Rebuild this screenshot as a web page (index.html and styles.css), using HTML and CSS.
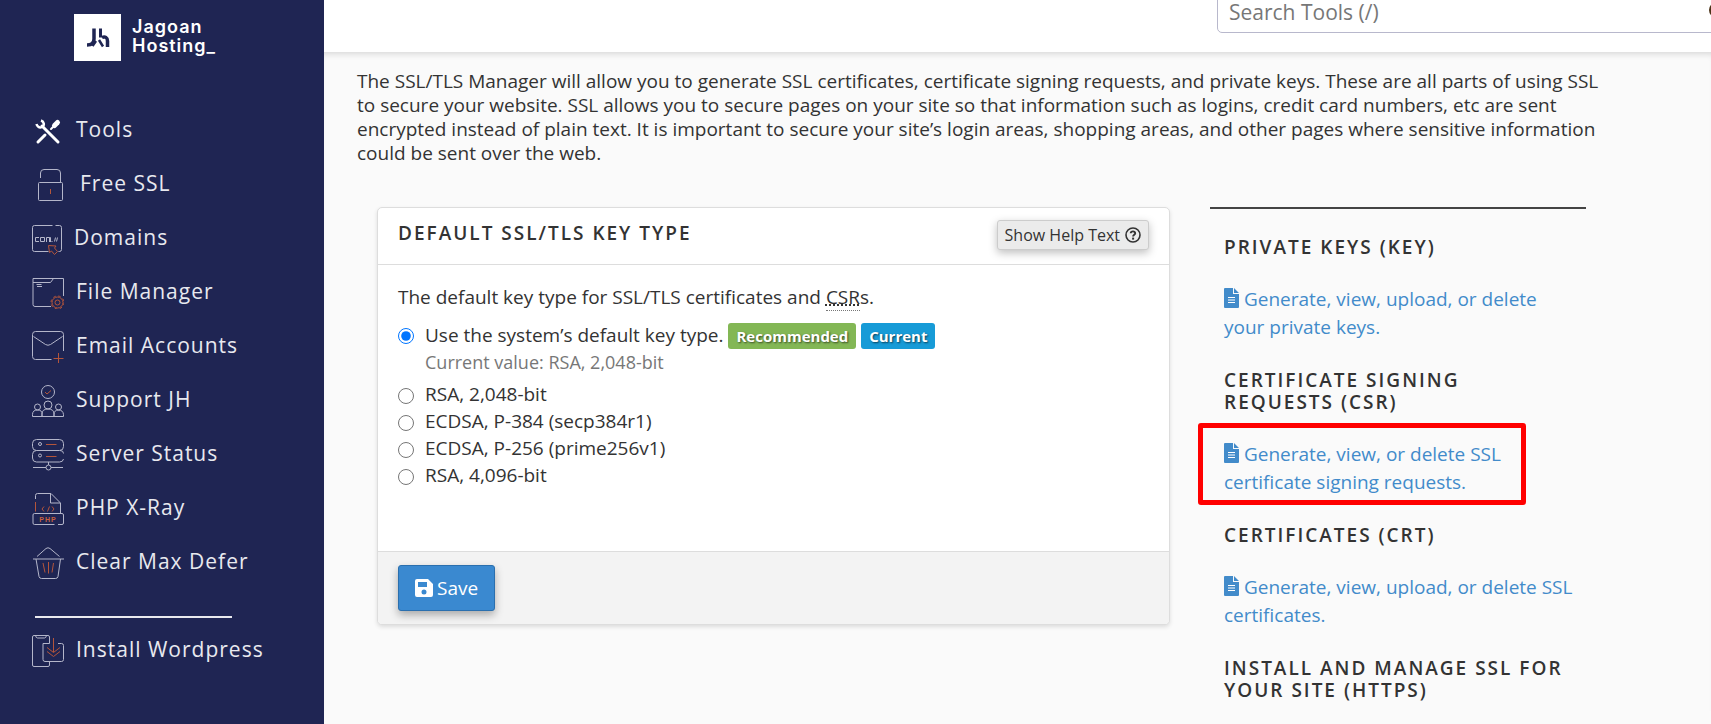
FILE: index.html
```html
<!DOCTYPE html>
<html lang="en">
<head>
<meta charset="utf-8">
<title>SSL/TLS Manager</title>
<link rel="stylesheet" href="styles.css">
</head>
<body>
<aside class="sidebar">
  <a class="brand" href="#">
    <svg class="brand-mark" viewBox="0 0 47 47" aria-hidden="true">
      <rect width="47" height="47" fill="#fff"/>
      <g fill="none" stroke="#1f2553">
        <path d="M20 14.500v10.500c0 4-2 6-7 6" stroke-width="3.500"/>
        <path d="M26.500 14.500v9" stroke-width="3"/>
        <path d="M28 23.500c3-1.500 5.500 0 5.500 3.500v6" stroke-width="3.500"/>
        <path d="M18.500 32l3.500-5M25 26l4 6.500" stroke-width="2.500"/>
      </g>
    </svg>
    <span class="brand-name">Jagoan<br>Hosting_</span>
  </a>
  <nav class="menu">
    <a class="menu-item" href="#">
      <svg class="icon" viewBox="0 0 32 32" aria-hidden="true">
        <g fill="none" stroke="#fff" stroke-linecap="round">
          <path d="M10 11l16 16" stroke-width="3"/>
          <path d="M6 27l7-7" stroke-width="3"/>
          <path d="M19 14l4-4" stroke-width="2"/>
          <path d="M22.500 10.500l3-3" stroke-width="5"/>
          <path d="M9 5.500c3 1 4 5 1 6.500s-5-1-5.500-3" stroke-width="2.500" stroke-linecap="butt"/>
        </g>
      </svg>
      <span>Tools</span>
    </a>
    <a class="menu-item menu-item-wide" href="#">
      <svg class="icon" viewBox="0 0 32 32" aria-hidden="true">
        <g class="line"><path d="M8.500 9V4q0-3.500 3.500-3.500h13q3.500 0 3.500 3.500v9.500"/><rect x="6.500" y="13.500" width="24" height="18" rx="1"/></g>
        <path class="accent" d="M18.500 20v5"/>
      </svg>
      <span>Free SSL</span>
    </a>
    <a class="menu-item menu-item-narrow" href="#">
      <svg class="icon" viewBox="0 0 32 32" aria-hidden="true">
        <g class="line"><path d="M20.500 2.500h-18q-2 0-2 2v22q0 2 2 2h14M23.500 2.500h4q2 0 2 2v22q0 2-2 2h-1"/>
        <path d="M7 14.500H3.500v4H7M8.500 14.500h4v4h-4zM14.500 19v-4.500h3V19M17.500 14.500h1V19M19.500 18.500h1M22.500 18.500l1-4M24.500 18.500l1-4"/></g>
        <path class="accent" d="M16.500 22.500l1 7 2-1.500 3 3.500 3-3-3-3.500 1.500-2z"/>
      </svg>
      <span>Domains</span>
    </a>
    <a class="menu-item" href="#">
      <svg class="icon" viewBox="0 0 32 32" aria-hidden="true">
        <g class="line"><path d="M19 29.500H3q-2 0-2-2V1.500h30.500V19"/><path d="M1 5.500h17.500l3-4M4.500 7.500h5M5 9.500h5"/></g>
        <g class="accent"><circle cx="25.500" cy="25.500" r="5.500"/><circle cx="25.500" cy="25.500" r="2.500"/><circle cx="25.500" cy="25.500" r="6.500" stroke-dasharray="2.500 2.600"/></g>
      </svg>
      <span>File Manager</span>
    </a>
    <a class="menu-item" href="#">
      <svg class="icon" viewBox="0 0 32 32" aria-hidden="true">
        <g class="line"><path d="M19.500 28.500h-16q-3 0-3-3v-22q0-3 3-3h25q3 0 3 3V20"/><path d="M1.500 5.500l12 8q2.500 1.500 5 0l12-8"/></g>
        <path class="accent" d="M26.500 22v10M21.500 27.500h10"/>
      </svg>
      <span>Email Accounts</span>
    </a>
    <a class="menu-item" href="#">
      <svg class="icon" viewBox="0 0 32 32" aria-hidden="true">
        <g class="line"><circle cx="16" cy="7" r="6.500"/><circle cx="16" cy="20" r="4"/><circle cx="5.500" cy="22" r="3"/><circle cx="26.500" cy="22" r="3"/><path d="M.500 31.500h31M.500 31.500v-2q0-4.500 5-4.500t4.500 4.500v2M10 31.500V29q0-5 6-5t6 5v2.500M22 31.500v-2q0-4.500 4.500-4.500t5 4.500v2"/></g>
        <path class="accent" d="M13 7l2 2 4-3.500"/>
      </svg>
      <span>Support JH</span>
    </a>
    <a class="menu-item" href="#">
      <svg class="icon" viewBox="0 0 32 32" aria-hidden="true">
        <g class="line"><rect x=".500" y=".500" width="31" height="11" rx="4"/><path d="M28 11.500q3.500 0 3.500 3M31.500 20q-.500 3-4 3H4.500q-4 0-4-4v-3.500q0-4 4-4"/><circle cx="8" cy="5" r="1.500"/><circle cx="8" cy="16.500" r="1.500"/><path d="M16.500 23v3M1 28.500h13M19 28.500h12"/><circle cx="16.500" cy="28.500" r="2.500"/></g>
        <path class="accent" d="M14 5.500h10.500M14 17.500h10.500"/>
      </svg>
      <span>Server Status</span>
    </a>
    <a class="menu-item" href="#">
      <svg class="icon" viewBox="0 0 32 32" aria-hidden="true">
        <g class="line"><path d="M3.500 6V2.500q0-2 2-2H19l9.500 9.500v10.500M18.500.500v9.500h9.500"/><path d="M22.500 31.500h-20q-1.500 0-1.500-1.500v-8q0-1.500 1.500-1.500h27.500q1.500 0 1.500 1.500v8q0 1.500-1.500 1.500h-4"/></g>
        <path class="accent" d="M3.500 9v9.500M12 13.500L10 16l2 2.500M17.500 13.500l-2 5M20 13.500l2 2.500-2 2.500"/>
        <text class="icon-text" x="16" y="29" text-anchor="middle">PHP</text>
      </svg>
      <span>PHP X-Ray</span>
    </a>
    <a class="menu-item" href="#">
      <svg class="icon" viewBox="0 0 32 32" aria-hidden="true">
        <g class="line"><path d="M5 9.500l9-8q2-1.500 4 0l9.500 8M1 12h31M4 12l3 17.500q.500 2 2.500 2h14q2 0 2.500-2L28.500 12"/></g>
        <path class="accent" d="M16.500 15v11.500M11 16l2 9.500M21.500 16l-1.500 9.500"/>
      </svg>
      <span>Clear Max Defer</span>
    </a>
    <hr class="menu-divider">
    <a class="menu-item" href="#">
      <svg class="icon" viewBox="0 0 32 32" aria-hidden="true">
        <g class="line"><path d="M17.500 8.500V2q0-1.500-1.500-1.500H2Q.500.500.500 2v28q0 1.500 1.500 1.500h14q1.500 0 1.500-1.500v-3M3.500.500q.500 2.500 2 2.500h7q1.500 0 2-2.500"/><path d="M17.500 8.500H11v16q0 2 2 2h16.500q2 0 2-2v-14q0-2-2-2H26"/></g>
        <path class="accent" d="M21.500 3v14M15 12.500l6.500 5 6.500-5M15 16.500l6.500 5 6.500-5"/>
      </svg>
      <span>Install Wordpress</span>
    </a>
  </nav>
</aside>

<div class="main">
  <header class="topbar">
    <div class="search">
      <input class="search-input" type="search" placeholder="Search Tools (/)" aria-label="Search Tools">
      <svg class="search-icon" viewBox="0 0 20 20" aria-hidden="true"><circle cx="8" cy="8" r="6.500" fill="none" stroke="#4a3216" stroke-width="3"/><path d="M13 13l6 6" stroke="#4a3216" stroke-width="3"/></svg>
    </div>
  </header>
  <main class="content">
    <p class="intro">The SSL/TLS Manager will allow you to generate SSL certificates, certificate signing requests, and private keys. These are all parts of using SSL to secure your website. SSL allows you to secure pages on your site so that information such as logins, credit card numbers, etc are sent encrypted instead of plain text. It is important to secure your site’s login areas, shopping areas, and other pages where sensitive information could be sent over the web.</p>
    <div class="columns">
      <form class="panel">
        <div class="panel-head">
          <h2 class="title">Default SSL/TLS Key Type</h2>
          <button class="help-button" type="button">Show Help Text
            <svg class="help-icon" viewBox="0 0 16 16" aria-hidden="true"><circle cx="8" cy="8" r="7" fill="none" stroke="#333" stroke-width="1.600"/><path d="M5.700 6.300C5.900 3.700 10.400 3.800 10.200 6.400 10.100 7.800 8.100 7.900 8.100 9.600" fill="none" stroke="#333" stroke-width="1.900"/><rect x="7.100" y="10.600" width="2" height="2" fill="#333"/></svg>
          </button>
        </div>
        <div class="panel-body">
          <p class="lead">The default key type for SSL/TLS certificates and <abbr class="abbr" title="Certificate Signing Requests">CSR</abbr>s.</p>
          <div class="option option-default">
            <input class="radio" type="radio" name="key" id="key-system" checked>
            <div>
              <label for="key-system">Use the system’s default key type.</label>
              <span class="badge badge-green">Recommended</span>
              <span class="badge badge-blue">Current</span>
              <div class="hint">Current value: RSA, 2,048-bit</div>
            </div>
          </div>
          <div class="option"><input class="radio" type="radio" name="key" id="key-rsa2"><label for="key-rsa2">RSA, 2,048-bit</label></div>
          <div class="option"><input class="radio" type="radio" name="key" id="key-ec384"><label for="key-ec384">ECDSA, P-384 (secp384r1)</label></div>
          <div class="option"><input class="radio" type="radio" name="key" id="key-ec256"><label for="key-ec256">ECDSA, P-256 (prime256v1)</label></div>
          <div class="option"><input class="radio" type="radio" name="key" id="key-rsa4"><label for="key-rsa4">RSA, 4,096-bit</label></div>
        </div>
        <div class="panel-foot">
          <button class="save-button" type="submit">
            <svg class="save-icon" viewBox="0 0 18 18" aria-hidden="true"><path fill="#fff" fill-rule="evenodd" d="M2 0h11l5 5v11a2 2 0 0 1-2 2H2a2 2 0 0 1-2-2V2a2 2 0 0 1 2-2zM3 3v5h9V3zM9 10.500a2.500 2.500 0 1 0 0 5 2.500 2.500 0 0 0 0-5z"/></svg>
            Save
          </button>
        </div>
      </form>

      <div class="links">
        <section class="link-group">
          <h3 class="title">Private Keys (KEY)</h3>
          <a class="link" href="#"><svg class="file-icon" viewBox="0 0 15 20" aria-hidden="true"><path d="M1 0h8v6h6v13a1 1 0 0 1-1 1H1a1 1 0 0 1-1-1V1a1 1 0 0 1 1-1zM10 0l5 5h-5z" fill="#428bca"/><path d="M4 9.500h7M4 12h7M4 14.500h7" stroke="#fff"/></svg> Generate, view, upload, or delete your private keys.</a>
        </section>
        <section class="link-group">
          <h3 class="title">Certificate Signing Requests (CSR)</h3>
          <div class="marked">
            <a class="link" href="#"><svg class="file-icon" viewBox="0 0 15 20" aria-hidden="true"><path d="M1 0h8v6h6v13a1 1 0 0 1-1 1H1a1 1 0 0 1-1-1V1a1 1 0 0 1 1-1zM10 0l5 5h-5z" fill="#428bca"/><path d="M4 9.500h7M4 12h7M4 14.500h7" stroke="#fff"/></svg> Generate, view, or delete SSL certificate signing requests.</a>
          </div>
        </section>
        <section class="link-group">
          <h3 class="title">Certificates (CRT)</h3>
          <a class="link" href="#"><svg class="file-icon" viewBox="0 0 15 20" aria-hidden="true"><path d="M1 0h8v6h6v13a1 1 0 0 1-1 1H1a1 1 0 0 1-1-1V1a1 1 0 0 1 1-1zM10 0l5 5h-5z" fill="#428bca"/><path d="M4 9.500h7M4 12h7M4 14.500h7" stroke="#fff"/></svg> Generate, view, upload, or delete SSL certificates.</a>
        </section>
        <section class="link-group">
          <h3 class="title">Install and Manage SSL for your site (HTTPS)</h3>
        </section>
      </div>
    </div>
  </main>
</div>
</body>
</html>
```
FILE: styles.css
```css
* { box-sizing: border-box; }

body {
  margin: 0;
  min-height: 100vh;
  display: flex;
  background: #fafafa;
  color: #333;
  font: 19px/24px "Open Sans", "Noto Sans", sans-serif;
}

h2, h3, p { margin: 0; }
button { font-family: inherit; color: inherit; cursor: pointer; }

/* Sidebar */
.sidebar {
  flex: 0 0 324px;
  background: #1f2553;
  padding-top: 14px;
}

.brand {
  display: flex;
  align-items: center;
  gap: 11px;
  padding-left: 74px;
  height: 47px;
  color: #fff;
  text-decoration: none;
}
.brand-mark { width: 47px; height: 47px; }
.brand-name {
  padding-bottom: 4px;
  font: 600 18px/19px Inter, sans-serif;
  letter-spacing: 1px;
}

.menu { padding: 41px 16px 0 32px; }
.menu-item {
  display: flex;
  align-items: center;
  gap: 12px;
  height: 54px;
  color: #e8e9ef;
  font-size: 21px;
  letter-spacing: 1px;
  text-decoration: none;
}
.menu-item-wide { gap: 16px; }
.menu-item-narrow { gap: 10px; }
.menu-divider {
  width: 197px;
  height: 2px;
  margin: 28px 0 4px 3px;
  border: 0;
  background: #e9e9ee;
}

.icon { flex: none; width: 32px; height: 32px; margin-top: 4px; }
.line { fill: none; stroke: #b4b6ca; }
.accent { fill: none; stroke: #b4553b; }
.icon-text { fill: #c8603f; font: 700 7px "Liberation Sans", sans-serif; }

/* Top bar */
.main { flex: 1; min-width: 0; }
.topbar {
  display: flex;
  justify-content: flex-end;
  height: 52px;
  overflow: hidden;
  background: #fff;
}
.search {
  position: relative;
  flex: none;
  width: 520px;
  height: 43px;
  margin: -10px -26px 0 0;
}
.search-input {
  width: 100%;
  height: 100%;
  padding: 0 11px;
  border: 1px solid #b8b8cc;
  border-radius: 5px;
  background: #fff;
  font: 21px "Open Sans", sans-serif;
}
.search-input::placeholder { color: #777; }
.search-icon {
  position: absolute;
  right: 8px;
  top: 12px;
  width: 20px;
  height: 20px;
}

/* Page content */
.content {
  padding: 17px 0 0 33px;
  box-shadow: inset 0 6px 6px -4px rgba(0, 0, 0, .14);
}
.intro { max-width: 1249px; }

.columns {
  display: grid;
  grid-template-columns: 793fr 376fr;
  gap: 40px;
  align-items: start;
  max-width: 1249px;
  padding: 42px 20px 0;
}

.title {
  font-size: 19px;
  line-height: 22px;
  font-weight: 600;
  letter-spacing: 2px;
  text-transform: uppercase;
}

.panel {
  overflow: hidden;
  background: #fff;
  border: 1px solid #ddd;
  border-radius: 5px;
  box-shadow: 0 2px 4px rgba(0, 0, 0, .12);
}
.panel-head {
  display: flex;
  justify-content: space-between;
  align-items: flex-start;
  padding: 12px 20px 14px;
  border-bottom: 1px solid #ddd;
}
.panel-head .title { padding-top: 2px; }
.help-button {
  display: flex;
  align-items: center;
  gap: 5px;
  height: 30px;
  padding: 0 7px;
  border: 1px solid #ccc;
  border-radius: 3px;
  background: #ebebeb;
  box-shadow: 0 3px 8px rgba(0, 0, 0, .25);
  font-size: 16px;
}
.help-icon { width: 16px; height: 16px; }

.panel-body { padding: 20px 20px 61px; }
.lead { margin-bottom: 13px; }
.abbr {
  text-decoration: underline dotted;
  border-bottom: 1px dotted #777;
}
.option {
  display: flex;
  gap: 11px;
  min-height: 27px;
}
.option-default { margin-bottom: 7px; line-height: 27px; }
.radio { flex: none; width: 16px; height: 16px; margin: 6px 0 0; }
.badge {
  display: inline-block;
  padding: 0 8px;
  border-radius: 3px;
  color: #fff;
  font-size: 15px;
  line-height: 26px;
  font-weight: 700;
  text-shadow: 1px 1px 2px rgba(0, 0, 0, .6);
}
.badge-green { background: #83b755; }
.badge-blue { background: #179bd7; }
.hint { color: #777; font-size: 18px; line-height: 26px; }

.panel-foot {
  padding: 13px 20px;
  border-top: 1px solid #ddd;
  background: #f3f3f3;
}
.save-button {
  display: flex;
  align-items: center;
  gap: 4px;
  height: 46px;
  padding: 0 16px;
  border: 1px solid #2a6fae;
  border-radius: 3px;
  background: #3a89d0;
  color: #fff;
  box-shadow: 0 4px 8px rgba(0, 0, 0, .3);
  font-size: 19px;
}
.save-icon { width: 18px; height: 18px; }

/* Related tools */
.links {
  display: grid;
  gap: 28px;
  padding: 27px 10px 10px 14px;
  border-top: 2px solid #444;
}
.link-group { display: grid; gap: 27px; }
.link {
  color: #428bca;
  line-height: 28px;
  text-decoration: none;
}
.file-icon { width: 15px; height: 20px; vertical-align: -2px; }

.marked { position: relative; }
.marked::after {
  content: "";
  position: absolute;
  inset: -17px 50px -9px -26px;
  border: 5px solid #f00;
  border-radius: 3px;
  pointer-events: none;
}
```
